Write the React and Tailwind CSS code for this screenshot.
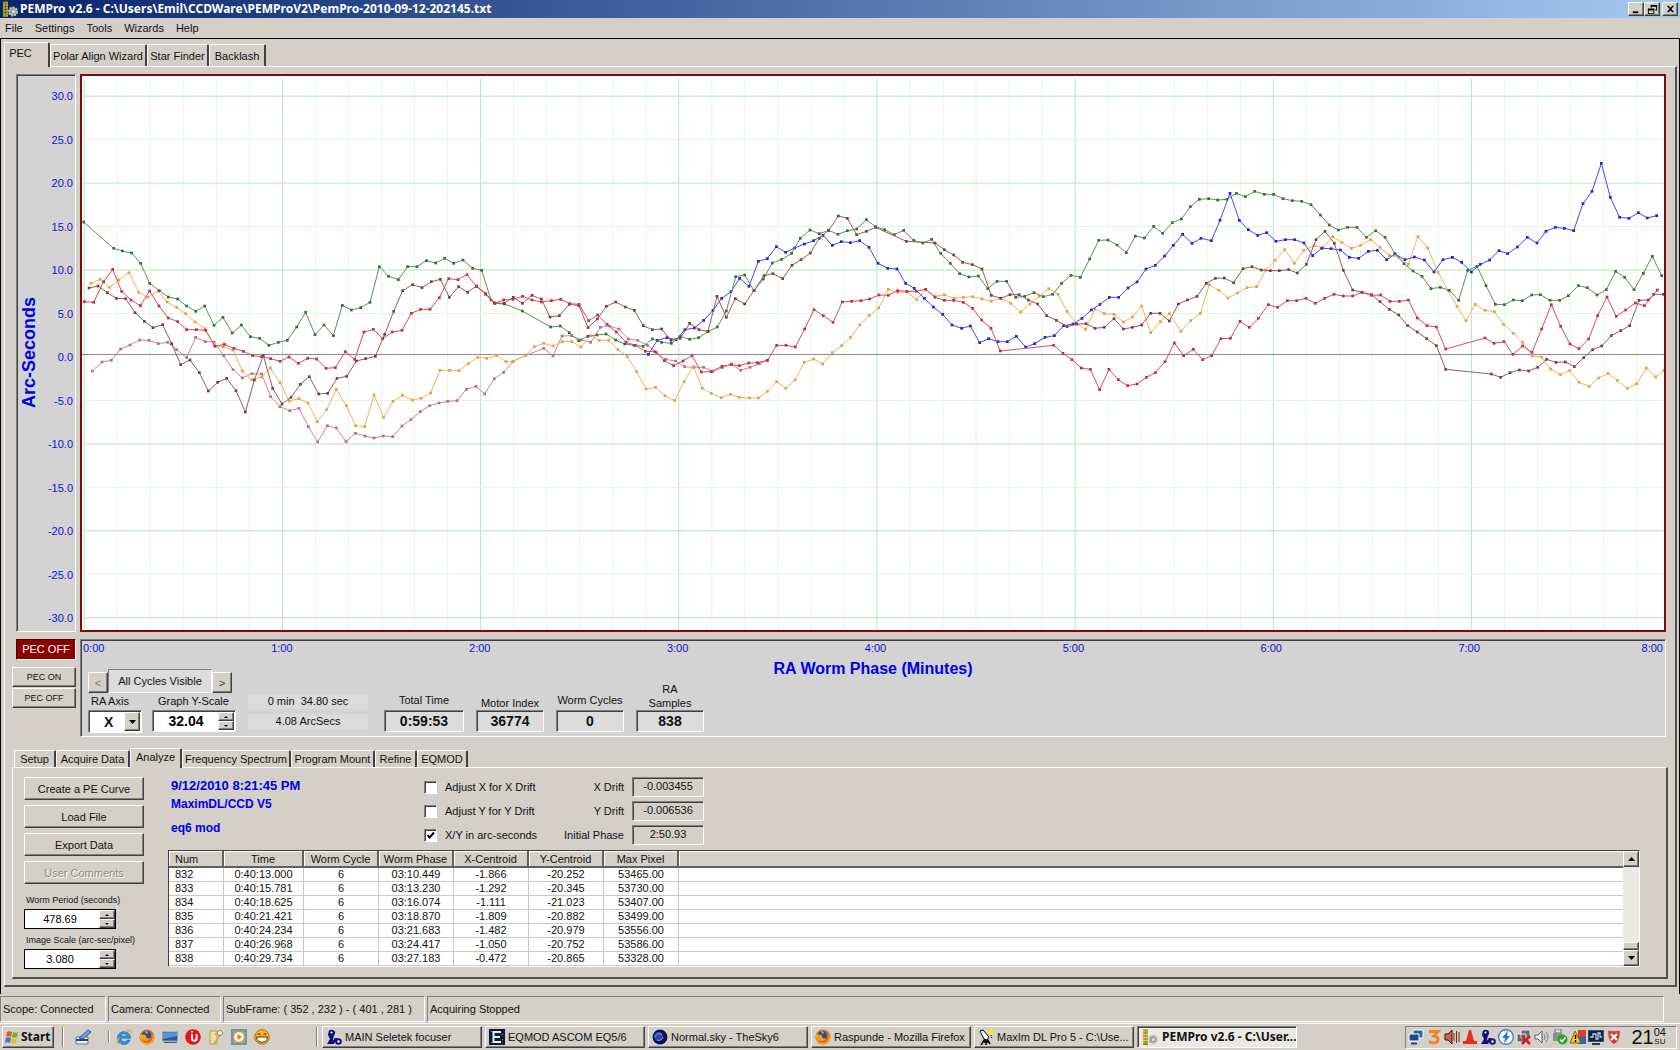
import { useState } from "react";
import clsx from "clsx";

/* Classic 3D edges */
const RAISED =
  "border border-t-white border-l-white border-b-[#404040] border-r-[#404040] bg-[#d4d0c8] shadow-[inset_-1px_-1px_0_#808080]";
const SUNKEN =
  "border border-t-[#808080] border-l-[#808080] border-b-white border-r-white shadow-[inset_1px_1px_0_#404040]";

const UI_FONT = "font-['Liberation_Sans',Arial,sans-serif] text-[11px] leading-[14px]";
const CAPTION_FONT = "font-['Noto_Sans','DejaVu_Sans',sans-serif] text-[12px] leading-[14px] font-bold";

/* ---------- Chart data ---------- */

/* The plot is 4746 x 1662 units. A trace is a list of blocks, each with its own origin. */
const A = [-6, 372];
const B = [1194, 372];
const C = [2394, 282];
const D = [3564, 192];

const TRACES = [
  {
    name: "cycle-6",
    line: "#d0849c",
    dot: "#bc6c84",
    blocks: [
      [A, "37,513 66,486 94,481 122,447 150,435 179,420 207,421 235,431 263,427 290,449 320,473 347,412 376,425 402,426 431,467 459,509 487,534 516,521 545,522 572,590 600,620 629,632 657,625 685,680 713,726 742,677 769,684 798,725 826,700 855,708 882,714 910,708 938,710 966,678 993,659 1021,635 1049,617 1077,609 1103,604 1131,602 1159,568 1188,559"],
      [B, "14,582 43,536 71,517 99,484 136,467 191,445 219,468 246,408 275,407 304,420 332,427 361,382 388,378 417,387 445,417 473,421 502,436 530,458 557,478 587,483 614,500 642,502 671,502 699,514 726,503 754,492 782,511 810,502 838,491 862,481"],
    ],
  },
  {
    name: "cycle-5",
    line: "#f8b060",
    dot: "#f09c40",
    blocks: [
      [A, "33,250 60,238 88,262 116,240 147,218 176,277 203,292 234,273 261,306 290,322 317,341 345,366 375,386 403,436 430,440 459,450 487,513 515,539 545,531 571,504 600,548 628,603 656,596 684,609 712,665 740,629 769,568 799,617 827,677 854,680 882,585 911,652 939,604 967,586 997,600 1023,595 1052,579 1080,511 1109,511 1137,512 1165,491 1193,472"],
      [B, "20,475 50,467 78,485 99,484 136,467 163,440 191,430 219,438 247,425 275,425 303,441 330,407 358,421 386,421 414,449 442,470 470,515 498,567 527,562 555,587 584,602 612,545 640,500 667,565 694,580 724,593 751,583 778,592 808,594 835,594 862,574 890,545 917,565 945,540 973,487 1001,477 1028,492 1057,458 1085,437 1112,412 1139,375 1168,346 1196,324"],
      [C, "25,358 53,367 81,366 110,389 137,358 165,379 193,374 222,385 250,382 278,380 306,387 334,394 362,384 392,400 422,426 450,402 478,379 506,356 534,373 561,424 590,462 617,478 645,417 673,431 702,433 730,456 757,441 785,408 812,488 841,455 868,431 903,484 932,452 961,430 988,344 1016,361 1044,384 1072,369 1101,353 1130,350 1157,300 1185,271 1214,239 1243,280"],
      [D, "101,331 132,317 160,322 188,290 216,307 244,325 272,316 302,299 330,322 358,346 386,352 415,373 444,290 473,324 504,397 534,451 561,499 588,542 616,493 645,511 673,515 701,553 730,580 758,607 786,648 814,651 842,687 871,704 899,692 927,727 958,739 986,714 1014,700 1042,721 1072,745 1100,731 1129,684 1157,711 1182,691"],
    ],
  },
  {
    name: "cycle-4",
    line: "#4848f0",
    dot: "#2020e0",
    blocks: [
      [B, "505,463 532,421 561,413 588,419 615,389 643,384 671,361 699,331 725,295 753,275 779,235 807,259 835,184 862,176 889,140 917,157 944,144 973,132 1001,122 1029,106 1057,136 1084,125 1111,128 1139,122 1167,142 1194,190"],
      [C, "23,295 51,297 77,340 103,355 133,385 160,411 188,433 216,465 245,475 271,468 299,518 326,506 354,515 382,515 409,499 437,531 464,521 495,502 523,497 551,467 579,462 606,445 634,420 660,403 688,382 716,382 744,354 771,336 798,297 826,286 854,258 880,226 908,193 936,220 963,205 994,212 1020,151 1050,70 1078,151 1105,179 1133,196 1160,188 1188,214 1216,209 1244,209"],
      [D, "102,309 128,347 155,325 183,326 211,330 238,352 266,355 295,334 322,331 350,359 375,342 405,359 433,351 463,360 492,396 519,359 547,352 575,367 604,396 631,373 659,360 687,332 713,341 742,321 772,292 801,309 828,274 856,262 883,265 911,272 939,191 966,154 994,70 1021,172 1049,232 1077,235 1105,218 1132,234 1160,227"],
    ],
  },
  {
    name: "cycle-3",
    line: "#5f8f5f",
    dot: "#34703a",
    blocks: [
      [A, "11,66 101,145 127,153 155,159 182,190 209,250 238,272 265,291 293,297 320,318 347,334 374,318 402,376 429,352 457,399 484,375 511,410 539,415 567,436 595,427 622,421 650,381 677,337 705,404 732,375 760,407 787,316 814,330 842,323 870,307 898,200 926,229 955,239 983,200 1011,200 1039,182 1067,189 1094,175 1121,190 1149,180 1178,205"],
      [B, "5,211 33,300 45,310 74,312 127,333 212,381 241,378 268,398 296,422 323,409 351,405 378,402 407,420 434,432 462,436 489,439 517,417 545,427 574,430 601,409 629,418 656,413 684,395 712,381 739,333 767,230 794,225 822,272 850,237 877,189 905,178 935,160 961,115 990,90 1018,101 1046,91 1074,103 1102,92 1130,87 1159,59 1187,80"],
      [C, "14,179 43,194 71,181 101,211 128,219 155,208 182,250 211,280 239,311 267,321 295,318 323,356 351,334 380,334 407,382 434,379 462,368 490,380 518,373 545,340 573,316 601,322 629,267 656,211 684,210 711,225 739,248 766,198 793,204 821,169 848,190 877,158 904,147 931,110 958,88 986,86 1013,90 1041,88 1069,70 1096,80 1124,64 1153,73 1181,73 1209,86 1237,92"],
      [D, "95,184 123,194 151,225 178,255 205,270 233,262 261,262 289,292 317,272 345,292 375,341 402,371 429,393 456,409 483,446 511,442 538,451 566,481 593,391 621,379 648,437 676,493 703,494 730,480 757,482 785,465 811,464 840,481 869,481 895,467 925,437 952,443 981,465 1009,449 1037,394 1064,412 1092,449 1120,400 1147,349 1175,407"],
    ],
  },
  {
    name: "cycle-2",
    line: "#985a62",
    dot: "#803c44",
    blocks: [
      [A, "27,264 54,258 82,278 109,295 137,296 165,338 193,364 219,383 248,374 275,431 302,494 330,480 358,518 385,573 413,547 440,535 468,572 496,636 523,540 550,467 578,565 606,612 633,592 661,553 688,530 716,582 743,580 771,535 800,529 829,483 857,476 886,469 914,403 941,334 968,272 998,254 1026,263 1054,245 1081,238 1108,292 1136,260 1163,277 1190,258"],
      [B, "17,281 43,308 72,310 100,292 127,310 156,286 184,297 210,351 238,347 268,313 297,317 324,383 352,357 379,319 407,306 436,321 463,331 490,377 517,389 545,387 573,421 601,415 629,370 657,389 684,394 711,289 739,352 766,296 794,312 822,272 852,227 879,221 908,236 936,196 963,179 991,159 1018,115 1046,91 1075,48 1102,55 1130,104 1159,94 1187,82"],
      [C, "79,214 165,219 193,239 221,255 248,277 277,284 306,297 334,376 362,385 390,374 417,374 445,390 473,402 500,437 529,451 561,470 590,462 618,461 645,475 673,472 702,446 730,477 757,472 785,465 812,430 840,430 868,453 895,402 922,390 951,379 979,340 1006,325 1033,324 1061,338 1089,296 1116,290 1144,300 1171,302 1198,302 1226,299 1252,309"],
      [D, "109,373 138,299 165,274 193,310 220,391 248,450 276,457 304,464 330,485 358,508 386,525 413,557 442,576 470,596 499,617 527,688 664,702 692,712 720,698 748,690 776,693 803,682 830,658 858,667 886,666 913,680 941,653 968,629 995,618 1024,587 1052,572 1079,557 1107,481 1135,480 1151,463 1180,463"],
    ],
  },
  {
    name: "cycle-1",
    line: "#d84c60",
    dot: "#c42c48",
    blocks: [
      [A, "13,305 41,307 71,245 98,208 125,274 153,300 181,317 209,273 237,318 265,354 293,365 320,389 349,389 377,391 405,439 433,433 462,445 490,454 518,467 545,470 572,476 600,484 627,471 655,490 683,475 710,477 738,505 766,503 796,455 824,478 852,396 880,388 908,416 937,396 966,391 994,340 1022,328 1050,328 1078,293 1106,236 1134,239 1161,224 1190,260"],
      [B, "17,283 43,310 71,300 99,298 128,289 156,300 184,306 214,302 242,298 269,311 297,313 326,362 353,345 381,373 409,396 438,427 466,436 496,454 525,455 553,482 581,497 609,483 636,467 664,516 693,515 726,499 754,494 778,497 806,489 832,488 862,481 890,436 918,436 946,441 974,387 1002,329 1030,347 1059,367 1087,306 1115,304 1143,302 1169,297 1197,285"],
      [C, "25,376 53,362 81,364 109,364 137,358 165,382 193,391 221,391 250,397 278,415 305,450 333,475 361,543 521,526 549,550 576,569 604,594 631,598 659,659 687,598 715,629 743,647 771,642 799,622 826,608 855,575 883,519 911,557 940,538 968,569 995,557 1023,506 1051,505 1080,454 1108,472 1135,445 1165,404 1193,412 1222,392 1250,392"],
      [D, "108,475 136,490 164,475 192,463 220,468 248,468 276,457 304,466 332,465 360,484 388,484 415,480 442,534 471,557 499,561 527,627 645,594 672,610 702,605 729,643 758,618 786,637 815,567 844,494 872,559 900,612 927,626 956,597 983,527 1011,471 1039,529 1067,510 1096,489 1123,497 1162,450"],
    ],
  },
];

function flatten(blocks) {
  return blocks.flatMap(([[ox, oy], pts]) =>
    pts.split(" ").map((p) => {
      const [x, y] = p.split(",").map(Number);
      return [x + ox, y + oy];
    })
  );
}

const V_LINES = Array.from({ length: 48 }, (_, i) => ({ x: 6 + i * 99.1, major: i % 6 === 0 }));
const H_LINES = Array.from({ length: 13 }, (_, i) => ({ y: 60 + i * 130.4, major: i % 2 === 0, zero: i === 6 }));

function Chart() {
  return (
    <div className="min-h-0 min-w-0 border-2 border-[#7c0a10] bg-white">
      <svg className="block h-full w-full" viewBox="0 0 4746 1662" preserveAspectRatio="none" role="img" aria-label="RA worm phase curves">
        {V_LINES.map(({ x, major }) => (
          <rect key={x} x={x - 1} y="8" width="3" height="1654" fill={major ? "#b8e8c0" : "#e0fae2"} />
        ))}
        {H_LINES.filter((l) => !l.zero).map(({ y, major }) => (
          <rect key={y} x="6" y={y - 1} width="4740" height="3" fill={major ? "#b8e4bc" : "#dcf8de"} />
        ))}
        <rect x="0" y="834" width="4746" height="3" fill="#8c8c8c" />
        {TRACES.map((t) => {
          const pts = flatten(t.blocks);
          return (
            <g key={t.name}>
              <polyline points={pts.map((p) => p.join(",")).join(" ")} fill="none" stroke={t.line} strokeWidth="3" />
              {pts.map(([x, y], i) => (
                <rect key={i} x={x - 4} y={y - 4} width="8" height="8" fill={t.dot} />
              ))}
            </g>
          );
        })}
      </svg>
    </div>
  );
}

/* ---------- Small icons ---------- */

function Ico({ children, size = "size-4" }) {
  return (
    <svg viewBox="0 0 16 16" className={clsx("block shrink-0", size)} aria-hidden="true">
      {children}
    </svg>
  );
}

const PemIcon = () => (
  <Ico>
    <path d="M1 1.500h5M1 4.500l5-1M1 7.500l5-1M1 10.500l5-1M1 13.500l5-1M1 15h5" stroke="#8a8414" strokeWidth="2" />
    <path d="M2 1v14M5 1v14" stroke="#d8cc30" strokeWidth="1" />
    <circle cx="11" cy="10.500" r="4" fill="#9a9a9a" stroke="#c8c8c8" strokeDasharray="2 1" strokeWidth="2" />
    <circle cx="11.500" cy="10.500" r="1.500" fill="#e4e4e4" />
  </Ico>
);

const SeletekIcon = () => (
  <Ico>
    <path d="M3 1.500c3-2 7 0 6 3L7.500 8l-1 7H1l3-5-2-4z" fill="#10107c" />
    <circle cx="5.500" cy="3.500" r="1.100" fill="#fff" />
    <path d="M7 15c0-3 3-3 3-6" fill="none" stroke="#10107c" strokeWidth="2.500" />
    <circle cx="12.500" cy="12.500" r="2.300" fill="#fff" stroke="#10107c" strokeWidth="2" />
  </Ico>
);

const EqmodIcon = () => (
  <Ico>
    <rect width="16" height="16" fill="#0c1c38" />
    <path d="M12 3H4.500v10H12M4.500 8H11" fill="none" stroke="#e8eef0" strokeWidth="2" />
    <path d="M2 2l2 1M13 5l1 1M13 10l1 1M2 14l1-1" stroke="#7aa4a0" />
  </Ico>
);

const SkyIcon = () => (
  <Ico>
    <circle cx="8" cy="8" r="7.500" fill="#101050" />
    <circle cx="6.500" cy="7.500" r="4.500" fill="#2848a8" />
    <path d="M3 8c2-4 5-4 7-2M5 11c2 1 5 0 6-3" stroke="#88a8e8" fill="none" />
  </Ico>
);

const FirefoxIcon = () => (
  <Ico>
    <circle cx="8" cy="8" r="7.500" fill="#e06810" />
    <circle cx="7.500" cy="6.500" r="4.500" fill="#284c98" />
    <path d="M1 6c1-1 2-1 3 0 1-1 3 0 3 1.500S9 10 11 9c-1 3-5 4-7.500 1.500C4 14 9 15 12 12c2-2 2-5 1-8 3 3 3 7 0 10-3 2-8 2-10-1S0 8 1 6z" fill="#f8a020" />
    <path d="M6 2c2 0 3 1 3 2L7 5z" fill="#88b8e0" />
  </Ico>
);

const MaximIcon = () => (
  <Ico>
    <path d="M2 2l3-1 6 7-2 3-3-1z" fill="#fff" stroke="#000" />
    <path d="M7 10l-4 6M8 11v5M9 10l3 5M4 13h7" stroke="#000" strokeWidth="1.500" />
    <circle cx="13" cy="3" r="2.500" fill="#f4ec18" />
    <path d="M13 6l1 4" stroke="#000" strokeDasharray="1 1" />
  </Ico>
);

const FlagIcon = () => (
  <Ico>
    <path d="M3 3c2-1 3-1 5 0L7 8C5 7 4 7 2 8z" fill="#e85820" />
    <path d="M9 3c2 1 3 1 5 0l-1 5c-2 1-3 1-5 0z" fill="#68b038" />
    <path d="M2 9c2-1 3-1 5 0l-1 5c-2-1-3-1-5 0z" fill="#3878d0" />
    <path d="M8 9c2 1 3 1 5 0l-1 5c-2 1-3 1-5 0z" fill="#f0bc18" />
  </Ico>
);

const DesktopIcon = () => (
  <Ico>
    <path d="M1 8h12v7H1z" fill="#e8eef4" stroke="#607890" />
    <path d="M1 11h12" stroke="#284878" strokeWidth="2" />
    <path d="M4 9l9-8 3 2-8 7z" fill="#68a8d8" stroke="#285888" />
  </Ico>
);

const IeIcon = () => (
  <Ico>
    <path d="M14.500 9.300H5a3.300 3.300 0 0 0 6.200 1.700h3A6.600 6.600 0 1 1 14.500 9.300zM5 7h5.800A3 3 0 0 0 5 7z" fill="#2890e0" stroke="#1868b8" strokeWidth=".5" />
    <path d="M15 5c1-4-2-5-6-2M3 9c-3 4-2 7 2 5" fill="none" stroke="#e8b428" strokeWidth="1.300" />
  </Ico>
);

const ScreenIcon = () => (
  <Ico>
    <rect x=".5" y="3" width="15" height="9" fill="#2858a8" stroke="#88a0b8" />
    <path d="M1 4h14v3L1 10z" fill="#5c94dc" />
    <path d="M2 13.500h13" stroke="#385878" />
  </Ico>
);

const UIcon = () => (
  <Ico>
    <circle cx="8" cy="8" r="7.800" fill="#e81010" />
    <path d="M7 5v4.500a2.300 2.300 0 0 0 4.600 0V5" fill="none" stroke="#fff" strokeWidth="2" />
    <circle cx="7" cy="2.800" r="1" fill="#fff" />
  </Ico>
);

const NotesIcon = () => (
  <Ico>
    <path d="M2 2h7v13H2z" fill="#f0e098" stroke="#b89c48" />
    <path d="M7 5h6l-3 4-4 6" fill="none" stroke="#c8b060" strokeWidth="2" />
    <circle cx="12" cy="4" r="2.500" fill="#f4f4f4" stroke="#908860" />
  </Ico>
);

const PlayIcon = () => (
  <Ico>
    <rect x="1" y="1" width="14" height="14" fill="#f09020" stroke="#48a0d8" strokeWidth="2" />
    <circle cx="8" cy="8" r="4.800" fill="#fff" />
    <path d="M6.500 5l4.500 3-4.500 3z" fill="#e87810" />
  </Ico>
);

const SmileIcon = () => (
  <Ico>
    <circle cx="8" cy="8" r="7.300" fill="#f8b820" stroke="#c06808" />
    <path d="M2.500 8h11c0 7-11 7-11 0z" fill="#fff" stroke="#582808" />
    <path d="M4 6c0-2 2-2 2 0M10 6c0-2 2-2 2 0" fill="none" stroke="#402008" />
  </Ico>
);

const TRAY = [
  ["network", <><path d="M5 1h10v8H5z" fill="#2868a8" stroke="#fff" /><path d="M1 5h10v7H1z" fill="#1c4c80" stroke="#fff" /><path d="M3 14.500h6" stroke="#204868" strokeWidth="2" /></>],
  ["three", <path d="M3 2.500h9L8 7c6 0 5 7-1 7-2 0-3-1-4-1.500" fill="none" stroke="#f08420" strokeWidth="3" />],
  ["sound", <><path d="M1 5h3l4-4v14l-4-4H1z" fill="#c86848" stroke="#401008" /><path d="M10 4v8M12.500 2v12M15 3v10" stroke="#702818" /></>],
  ["cone", <path d="M7 1h2l3 11h3v3H1v-3h3z" fill="#ec2c20" />],
  ["seletek", <><path d="M3 1.500c3-2 7 0 6 3L7.500 8l-1 7H1l3-5-2-4z" fill="#10107c" /><circle cx="5.500" cy="3.500" r="1.100" fill="#fff" /><path d="M7 15c0-3 3-3 3-6" fill="none" stroke="#10107c" strokeWidth="2.500" /><circle cx="12.500" cy="12.500" r="2.300" fill="#fff" stroke="#10107c" strokeWidth="2" /></>],
  ["bolt", <><circle cx="8" cy="8" r="7.300" fill="#fff" stroke="#3c88d0" strokeWidth="1.400" /><path d="M10 1.500L4 9h3l-1 5.500L12 7H9z" fill="#2878c8" /></>],
  ["offline", <><path d="M5 1h9v8H5zM1 5h9v8H1z" fill="#606c74" stroke="#e8e8e8" /><path d="M6 7l8 8M14 7l-8 8" stroke="#d81818" strokeWidth="2.500" /></>],
  ["volume", <><path d="M1 6h3l4-4v12l-4-4H1z" fill="#e8ecec" stroke="#586068" /><path d="M10 5q2 3 0 6M12 3q4 5 0 10" fill="none" stroke="#788088" /></>],
  ["usb", <><path d="M3 0h6v4H3z" fill="#d8d8d8" stroke="#707070" /><path d="M1 4h9v8H1z" fill="#889090" /><circle cx="10.500" cy="10.500" r="5" fill="#28a428" /><path d="M8 10.500l2 2 3.500-4" fill="none" stroke="#fff" strokeWidth="1.600" /></>],
  ["warning", <><path d="M8 1h8v7H8z" fill="#d84028" /><path d="M8 8h8v7H8z" fill="#2868c0" /><path d="M5 2l6 12H0z" fill="#f8c820" stroke="#806008" /><path d="M5.500 6v4M5.500 11v2" stroke="#000" strokeWidth="1.400" /></>],
  ["monitor", <><rect x=".5" y="1.500" width="15" height="11" fill="#14243c" stroke="#405064" /><path d="M2 8h3V5h3v5h2V4h2v4h2" fill="none" stroke="#a8d0f0" strokeWidth="1.300" /><path d="M4 15h8" stroke="#303840" strokeWidth="2" /></>],
  ["shield", <><path d="M2 1c4 1 8 1 12 0 1 7-1 12-6 14.500C3 13 1 8 2 1z" fill="#d04040" stroke="#ecc8c8" /><path d="M5 5l6 6M11 5l-6 6" stroke="#fff" strokeWidth="2" /></>],
];

/* ---------- Form parts ---------- */

function Spin({ id, value, className, inputClass, buttonClass }) {
  const [v, setV] = useState(value);
  const step = (d) => setV((s) => (Number(s) + d).toFixed(s.split(".")[1].length));
  return (
    <div className={clsx("flex bg-white", className)}>
      <input id={id} value={v} onChange={(e) => setV(e.target.value)} className={clsx("min-w-0 flex-1 text-center text-black outline-none", inputClass)} />
      <div className={clsx("flex shrink-0 flex-col", buttonClass)}>
        {[1, -1].map((d) => (
          <button key={d} type="button" aria-label={d > 0 ? "Increase" : "Decrease"} onClick={() => step(d / 10)} className={clsx(RAISED, "flex min-h-0 flex-1 items-center justify-center")}>
            <svg viewBox="0 0 4 2" className="h-[2px] w-[4px]">
              <path d={d > 0 ? "M2 0l2 2H0z" : "M0 0h4L2 2z"} fill="#000" />
            </svg>
          </button>
        ))}
      </div>
    </div>
  );
}

function Tabs({ items, active, label }) {
  return (
    <div role="tablist" aria-label={label} className="flex items-end">
      {items.map(([name, width]) => {
        const on = name === active;
        return (
          <button
            key={name}
            type="button"
            role="tab"
            aria-selected={on}
            className={clsx(
              "rounded-t-[2px] border-t border-l border-r-2 border-t-white border-l-white border-r-[#404040] bg-[#d4d0c8] text-center whitespace-nowrap",
              width,
              on ? "relative -mb-px pb-1" : "",
              label === "Main" ? (on ? "h-[25px]" : "h-[22px]") : on ? "h-[20px]" : "h-[17px]"
            )}
          >
            {name}
          </button>
        );
      })}
    </div>
  );
}

function Stat({ label, value, width, tight }) {
  return (
    <div className={clsx("flex flex-col text-center", width)}>
      <span className={clsx("whitespace-nowrap", !tight && "mb-[3px]")}>{label}</span>
      <output className={clsx(SUNKEN, "h-[22px] bg-[#dcdcdc] text-[14px] leading-[20px] font-bold")}>{value}</output>
    </div>
  );
}

const Y_LABELS = ["30.0", "25.0", "20.0", "15.0", "10.0", "5.0", "0.0", "-5.0", "-10.0", "-15.0", "-20.0", "-25.0", "-30.0"];
const X_LABELS = ["0:00", "1:00", "2:00", "3:00", "4:00", "5:00", "6:00", "7:00", "8:00"];

function GraphArea() {
  return (
    <div className="grid min-h-0 flex-1 grid-cols-[64px_1fr] grid-rows-[minmax(0,1fr)_98px] gap-x-1 gap-y-[7px] pr-[2px]">
      <div className={clsx(SUNKEN, "ml-1 flex bg-[#d3d3d3] text-[#1010d0]")}>
        <div className="flex w-6 items-center justify-center">
          <span className="rotate-180 text-[18px] leading-[20px] font-bold whitespace-nowrap text-[#0000e8] [writing-mode:vertical-rl]">
            Arc-Seconds
          </span>
        </div>
        <div className="flex flex-1 flex-col justify-between pt-[14px] pr-[2px] pb-[6px] text-right">
          {Y_LABELS.map((l) => (
            <span key={l}>{l}</span>
          ))}
        </div>
      </div>

      <Chart />

      <div className="flex flex-col">
        <div className="ml-1 h-[21px] border border-t-[#500000] border-l-[#500000] border-r-white border-b-white bg-[#8b0000] text-center leading-[19px] text-white">
          PEC OFF
        </div>
        <button type="button" className={clsx(RAISED, "mt-[7px] h-[20px] text-[9px]")}>PEC ON</button>
        <button type="button" className={clsx(RAISED, "mt-px h-[20px] text-[9px]")}>PEC OFF</button>
      </div>

      <div className={clsx(SUNKEN, "flex min-w-0 flex-col bg-[#d3d3d3] px-[2px] pt-px")}>
        <div className="grid grid-cols-[100fr_repeat(7,198fr)_95fr] text-center text-[#1010d0]">
          {X_LABELS.map((l) => (
            <span key={l} className="first:text-left last:text-right">{l}</span>
          ))}
        </div>
        <div className="grid flex-1">
          <h2 className="col-start-1 row-start-1 justify-self-center pt-[5px] text-[16px] leading-[18px] font-bold text-[#0000e8]">
            RA Worm Phase (Minutes)
          </h2>
          <div className="col-start-1 row-start-1 flex items-end self-end pb-[3px] pl-[5px]">
            <div className="flex flex-col">
              <div className="flex h-6 items-end">
                <button type="button" className={clsx(RAISED, "h-[21px] w-[20px] text-[#808080]")}>&lt;</button>
                <div className="h-6 w-[104px] border border-t-[#808080] border-l-[#808080] border-r-white border-b-white bg-[#dcdcdc] text-center leading-[23px]">
                  All Cycles Visible
                </div>
                <button type="button" className={clsx(RAISED, "h-[21px] w-[20px] text-[#404040]")}>&gt;</button>
              </div>
              <div className="mt-px grid grid-cols-[54px_84px] gap-x-[10px] gap-y-[2px]">
                <label htmlFor="axis" className="pl-[3px]">RA Axis</label>
                <label htmlFor="yscale" className="pl-[6px] whitespace-nowrap">Graph Y-Scale</label>
                <div className={clsx(SUNKEN, "relative h-[23px] bg-white p-px")}>
                  <select id="axis" defaultValue="X" className="h-full w-full appearance-none bg-white pl-[14px] text-[14px] leading-[18px] font-bold outline-none">
                    <option>X</option>
                    <option>Y</option>
                  </select>
                  <span className={clsx(RAISED, "pointer-events-none absolute top-px right-px bottom-px flex w-4 items-center justify-center")}>
                    <svg viewBox="0 0 7 4" className="h-[4px] w-[7px]"><path d="M0 0h7L3.500 4z" /></svg>
                  </span>
                </div>
                <Spin id="yscale" value="32.04" className={clsx(SUNKEN, "h-[22px] p-px")} inputClass="text-[14px] font-bold" buttonClass="w-4" />
              </div>
            </div>
            <div className="mb-1 ml-3 flex w-[120px] flex-col gap-[5px] text-center">
              <div className="h-[15px] bg-[#dbdbdb] leading-[15px] whitespace-pre">0 min  34.80 sec</div>
              <div className="h-[15px] bg-[#dbdbdb] leading-[15px]">4.08 ArcSecs</div>
            </div>
            <div className="mb-px ml-4 flex items-end gap-3">
              <Stat label="Total Time" value="0:59:53" width="w-[80px]" />
              <Stat label="Motor Index" value="36774" width="w-[68px]" tight />
              <Stat label="Worm Cycles" value="0" width="w-[68px]" />
              <Stat label={<>RA<br />Samples</>} value="838" width="w-[68px]" tight />
            </div>
          </div>
        </div>
      </div>
    </div>
  );
}

/* ---------- Analyze tab ---------- */

const COLUMNS = [
  ["Num", "w-[55px]"],
  ["Time", "w-[80px]"],
  ["Worm Cycle", "w-[75px]"],
  ["Worm Phase", "w-[75px]"],
  ["X-Centroid", "w-[75px]"],
  ["Y-Centroid", "w-[75px]"],
  ["Max Pixel", "w-[75px]"],
];

const ROWS = [
  ["832", "0:40:13.000", "6", "03:10.449", "-1.866", "-20.252", "53465.00"],
  ["833", "0:40:15.781", "6", "03:13.230", "-1.292", "-20.345", "53730.00"],
  ["834", "0:40:18.625", "6", "03:16.074", "-1.111", "-21.023", "53407.00"],
  ["835", "0:40:21.421", "6", "03:18.870", "-1.809", "-20.882", "53499.00"],
  ["836", "0:40:24.234", "6", "03:21.683", "-1.482", "-20.979", "53556.00"],
  ["837", "0:40:26.968", "6", "03:24.417", "-1.050", "-20.752", "53586.00"],
  ["838", "0:40:29.734", "6", "03:27.183", "-0.472", "-20.865", "53328.00"],
];

const OPTIONS = [
  ["Adjust X for X Drift", false, "X Drift", "-0.003455"],
  ["Adjust Y for Y Drift", false, "Y Drift", "-0.006536"],
  ["X/Y in arc-seconds", true, "Initial Phase", "2:50.93"],
];

function OptionRow({ text, on, label, value }) {
  return (
    <div className="flex h-5 items-center">
      <label className="flex items-center gap-2 whitespace-nowrap">
        <span className="relative flex">
          <input type="checkbox" defaultChecked={on} className={clsx(SUNKEN, "peer size-[13px] appearance-none bg-white")} />
          <svg viewBox="0 0 13 13" className="pointer-events-none absolute inset-0 hidden size-[13px] peer-checked:block">
            <path d="M3.500 6l2 2.500 4.500-5" fill="none" stroke="#000" strokeWidth="2" />
          </svg>
        </span>
        {text}
      </label>
      <span className="flex-1 text-right whitespace-nowrap">{label}</span>
      <output className={clsx(SUNKEN, "ml-2 h-5 w-[72px] text-center leading-[17px]")}>{value}</output>
    </div>
  );
}

function ScrollArrow({ up }) {
  return (
    <button type="button" aria-label={up ? "Scroll up" : "Scroll down"} className={clsx(RAISED, "flex h-4 w-4 shrink-0 items-center justify-center")}>
      <svg viewBox="0 0 7 4" className="h-[4px] w-[7px]">
        <path d={up ? "M3.500 0L7 4H0z" : "M0 0h7L3.500 4z"} />
      </svg>
    </button>
  );
}

function DataTable() {
  return (
    <div className="flex border border-t-[#404040] border-l-[#404040] border-r-white border-b-white bg-white">
      <table className="w-full flex-1 table-fixed border-separate border-spacing-0 text-center">
        <thead>
          <tr className="h-[17px] bg-[#d4d0c8]">
            {COLUMNS.map(([name, width], i) => (
              <th key={name} className={clsx(width, i === 0 && "pl-[6px] text-left", "border-r-2 border-b-2 border-[#606060] p-0 font-normal whitespace-nowrap shadow-[inset_1px_1px_0_#fff]")}>
                {name}
              </th>
            ))}
            <th className="border-b-2 border-[#606060] p-0 shadow-[inset_1px_1px_0_#fff]" />
          </tr>
        </thead>
        <tbody>
          {ROWS.map((row) => (
            <tr key={row[0]} className="h-[14px]">
              {row.map((cell, i) => (
                <td key={i} className={clsx(i === 0 && "pl-[6px] text-left", "border-r border-b border-[#c8c8c8] p-0 leading-[13px]")}>
                  {cell}
                </td>
              ))}
              <td className="border-b border-[#c8c8c8] p-0" />
            </tr>
          ))}
        </tbody>
      </table>
      <div className="flex w-4 flex-col bg-[#ebe9e4]">
        <ScrollArrow up />
        <div className="flex-1" />
        <div className={clsx(RAISED, "h-2")} />
        <ScrollArrow />
      </div>
    </div>
  );
}

function AnalyzePanel() {
  return (
    <div className="flex gap-6 border-t border-l border-r-2 border-b-2 border-t-white border-l-white border-r-[#505050] border-b-[#505050] pt-[9px] pr-[26px] pb-[8px] pl-[11px]">
      <div className="flex w-[120px] shrink-0 flex-col">
        <div className="flex flex-col gap-[5px]">
          {["Create a PE Curve", "Load File", "Export Data"].map((t) => (
            <button key={t} type="button" className={clsx(RAISED, "h-[23px]")}>{t}</button>
          ))}
          <button type="button" disabled className={clsx(RAISED, "h-[23px] text-[#8c8c84] [text-shadow:1px_1px_0_#fff]")}>
            User Comments
          </button>
        </div>
        <label htmlFor="period" className="mt-[10px] pl-[2px] text-[9px] leading-[12px] whitespace-nowrap">
          Worm Period (seconds)
        </label>
        <Spin id="period" value="478.69" className="mt-[3px] h-5 w-[92px] border border-black" inputClass="pr-1" buttonClass="w-4" />
        <label htmlFor="imgscale" className="mt-[5px] pl-[2px] text-[9px] leading-[12px] whitespace-nowrap">
          Image Scale (arc-sec/pixel)
        </label>
        <Spin id="imgscale" value="3.080" className="mt-[3px] h-5 w-[92px] border border-black" inputClass="pr-1" buttonClass="w-4" />
      </div>

      <div className="min-w-0 flex-1">
        <div className="flex h-[73px]">
          <div className="w-[256px] pl-[3px] text-[12px] leading-[18px] font-bold text-[#0000e8]">
            <p className="text-[13px]">9/12/2010 8:21:45 PM</p>
            <p>MaximDL/CCD V5</p>
            <p className="mt-[6px]">eq6 mod</p>
          </div>
          <div className="flex w-[280px] flex-col gap-1">
            {OPTIONS.map(([text, on, label, value]) => (
              <OptionRow key={text} text={text} on={on} label={label} value={value} />
            ))}
          </div>
        </div>
        <DataTable />
      </div>
    </div>
  );
}

/* ---------- Window frame ---------- */

function TitleBar() {
  const glyphs = [
    ["Minimize", "M2 8h6v2H2z"],
    ["Restore", "M4 1h7v6H9V6h1V3H5v1H4zM1 5h7v6H1zM2 7v3h5V7z"],
    ["Close", "M2 2h2l2 2 2-2h2L7 5.500 10 9H8L6 7 4 9H2l3-3.500z"],
  ];
  return (
    <header className={clsx(CAPTION_FONT, "flex h-[18px] shrink-0 items-center bg-linear-to-r from-[#0a246a] to-[#a6caf0] px-[2px] text-white")}>
      <PemIcon />
      <h1 className="ml-[2px] flex-1 whitespace-nowrap">PEMPro v2.6 - C:\Users\Emil\CCDWare\PEMProV2\PemPro-2010-09-12-202145.txt</h1>
      {glyphs.map(([name, d]) => (
        <button key={name} type="button" aria-label={name} className={clsx(RAISED, "flex h-[14px] w-4 items-center justify-center last:ml-[2px]")}>
          <svg viewBox="0 0 12 12" className="size-[11px]">
            <path d={d} fillRule="evenodd" />
          </svg>
        </button>
      ))}
    </header>
  );
}

function StatusBar() {
  const cell = "flex items-center border border-t-[#808080] border-l-[#808080] border-r-white border-b-white pl-[2px] whitespace-nowrap";
  return (
    <div className="mt-[2px] flex h-[26px] shrink-0 gap-[2px] pr-4">
      <div className={clsx(cell, "w-[106px]")}>Scope: Connected</div>
      <div className={clsx(cell, "w-[113px]")}>Camera: Connected</div>
      <div className={clsx(cell, "w-[202px]")}>SubFrame: ( 352 , 232 ) - ( 401 , 281 )</div>
      <div className={clsx(cell, "flex-1")}>Acquiring Stopped</div>
    </div>
  );
}

const TASKS = [
  [SeletekIcon, "MAIN Seletek focuser"],
  [EqmodIcon, "EQMOD ASCOM EQ5/6"],
  [SkyIcon, "Normal.sky - TheSky6"],
  [FirefoxIcon, "Raspunde - Mozilla Firefox"],
  [MaximIcon, "MaxIm DL Pro 5 - C:\\Use..."],
];

function Divider() {
  return <span className="h-5 w-[2px] border-l border-l-[#808080] border-r border-r-white" />;
}

function TaskBar() {
  return (
    <footer className="mt-px flex h-[27px] shrink-0 items-center border-t border-white pr-[3px] pl-[2px]">
      <button type="button" className={clsx(RAISED, CAPTION_FONT, "flex h-[22px] w-[52px] items-center gap-px pl-px")}>
        <FlagIcon />
        Start
      </button>
      <div className="ml-2 flex items-center">
        <Divider />
        <span className="mx-[11px]"><DesktopIcon /></span>
        <span className="ml-[6px]"><Divider /></span>
      </div>
      <div className="mr-[46px] ml-[6px] flex items-center gap-[7px]">
        <IeIcon />
        <FirefoxIcon />
        <ScreenIcon />
        <UIcon />
        <NotesIcon />
        <PlayIcon />
        <SmileIcon />
      </div>
      <Divider />
      <div className="ml-1 flex min-w-0 gap-[3px]">
        {TASKS.map(([Icon, title]) => (
          <button key={title} type="button" className={clsx(RAISED, "flex h-[22px] w-[160px] items-center gap-[3px] overflow-hidden pl-[3px] whitespace-nowrap")}>
            <Icon />
            {title}
          </button>
        ))}
        <button type="button" className={clsx(SUNKEN, CAPTION_FONT, "flex h-[22px] w-[160px] items-center gap-1 overflow-hidden bg-[#ebe9e4] pl-[4px] whitespace-nowrap")}>
          <PemIcon />
          PEMPro v2.6 - C:\User...
        </button>
      </div>
      <div className="ml-auto flex h-[23px] items-center border border-t-[#808080] border-l-[#808080] border-r-white border-b-white pr-[10px] pl-[2px]">
        <div className="flex gap-[2px]">
          {TRAY.map(([name, art]) => (
            <Ico key={name}>{art}</Ico>
          ))}
        </div>
        <div className="ml-[10px] flex">
          <span className="text-[20px] leading-[20px]">21</span>
          <span className="flex flex-col text-center text-[11px] leading-[10px]">
            04
            <span className="text-[8px] leading-[9px]">SU</span>
          </span>
        </div>
      </div>
    </footer>
  );
}

export default function App() {
  return (
    <div className={clsx(UI_FONT, "flex h-screen flex-col overflow-hidden bg-[#d4d0c8] text-[#101010]")}>
      <TitleBar />
      <nav className="flex h-5 shrink-0 items-center gap-3 pl-[5px]">
        {["File", "Settings", "Tools", "Wizards", "Help"].map((m) => (
          <button key={m} type="button">{m}</button>
        ))}
      </nav>

      <main className="flex min-h-0 flex-1 flex-col border-x border-t border-black pt-[3px] pr-[2px] pb-[7px] pl-[3px]">
        <Tabs
          label="Main"
          active="PEC"
          items={[["PEC", "w-[46px] pr-3"], ["Polar Align Wizard", "w-[97px]"], ["Star Finder", "w-[62px]"], ["Backlash", "w-[57px]"]]}
        />
        <div className="flex min-h-0 flex-1 flex-col border-t border-l border-r-2 border-b-2 border-t-white border-l-white border-r-[#505050] border-b-[#505050] pt-[7px] pr-[7px] pb-[6px] pl-[7px]">
          <GraphArea />
          <div className="mt-[11px] pl-[2px]">
            <Tabs
              label="Tools"
              active="Analyze"
              items={[
                ["Setup", "w-[42px]"],
                ["Acquire Data", "w-[74px]"],
                ["Analyze", "w-[52px]"],
                ["Frequency Spectrum", "w-[109px]"],
                ["Program Mount", "w-[84px]"],
                ["Refine", "w-[42px]"],
                ["EQMOD", "w-[51px]"],
              ]}
            />
          </div>
          <AnalyzePanel />
        </div>
      </main>

      <StatusBar />
      <TaskBar />
    </div>
  );
}
